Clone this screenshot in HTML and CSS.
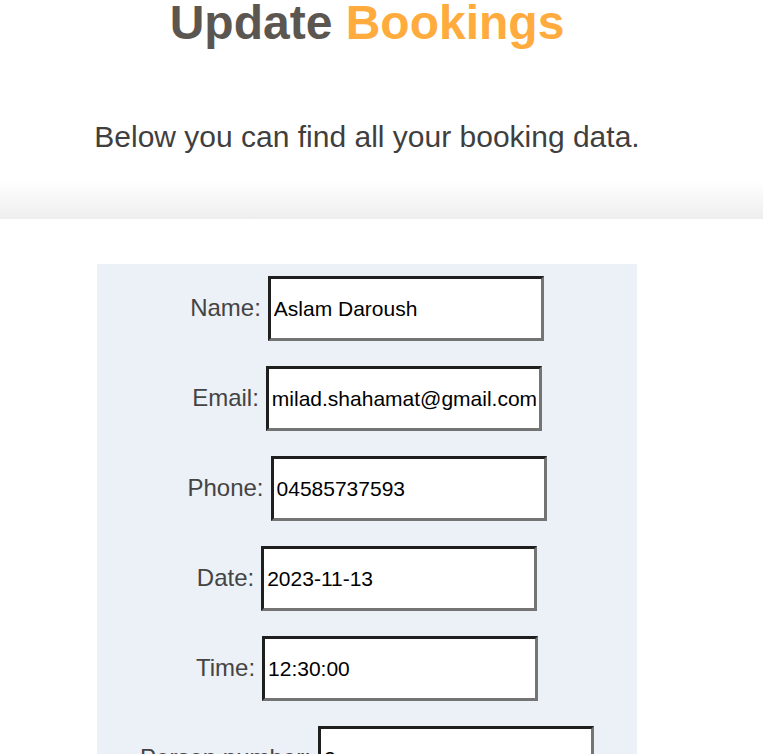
FILE: index.html
```html
<!DOCTYPE html>
<html lang="en">
<head>
<meta charset="utf-8">
<title>Update Bookings</title>
<link rel="stylesheet" href="styles.css">
</head>
<body>
<header class="hero">
  <div class="hero-inner">
    <h1 class="title"><span class="title-dark">Update</span> <span class="title-accent">Bookings</span></h1>
    <p class="subtitle">Below you can find all your booking data.</p>
  </div>
</header>
<main class="main">
  <form class="booking-form">
    <div class="row"><label class="label" for="name">Name:</label><input class="field" id="name" type="text" value="Aslam Daroush"></div>
    <div class="row"><label class="label" for="email">Email:</label><input class="field" id="email" type="text" value="milad.shahamat@gmail.com"></div>
    <div class="row"><label class="label" for="phone">Phone:</label><input class="field" id="phone" type="text" value="04585737593"></div>
    <div class="row"><label class="label" for="date">Date:</label><input class="field" id="date" type="text" value="2023-11-13"></div>
    <div class="row"><label class="label" for="time">Time:</label><input class="field" id="time" type="text" value="12:30:00"></div>
    <div class="row"><label class="label" for="persons">Person number:</label><input class="field" id="persons" type="text" value="2"></div>
    <div class="row"><button class="submit" type="button">Update</button></div>
  </form>
</main>
</body>
</html>
```
FILE: styles.css
```css
html, body {
  margin: 0;
  padding: 0;
  background: #ffffff;
  font-family: "Liberation Sans", Arial, sans-serif;
}

.hero {
  height: 219px;
  background: linear-gradient(to bottom, #ffffff 0, #ffffff 180px, #eeeeee 219px);
}

.hero-inner {
  width: 734px;
  text-align: center;
}

.title {
  margin: 0;
  font-size: 48px;
  line-height: 45px;
  font-weight: bold;
}

.title-dark {
  color: #5c5650;
}

.title-accent {
  color: #ffab3d;
}

.subtitle {
  margin: 75px 0 0;
  font-size: 30px;
  line-height: 34px;
  color: #3f3f3f;
}

.main {
  width: 734px;
  padding-top: 45px;
}

.booking-form {
  width: 540px;
  margin: 0 auto;
  padding-top: 12px;
  background: #ecf0f7;
  min-height: 700px;
}

.row {
  display: flex;
  justify-content: center;
  align-items: baseline;
  column-gap: 7px;
  margin-bottom: 25px;
}

.label {
  font-size: 24px;
  color: #444444;
}

.field {
  box-sizing: border-box;
  width: 276px;
  height: 65px;
  padding: 0 3px;
  margin: 0;
  font-family: "Liberation Sans", Arial, sans-serif;
  font-size: 21px;
  color: #000000;
  background: #ffffff;
  border-style: solid;
  border-width: 3px;
  border-color: #1f1f1f #747474 #747474 #1f1f1f;
  outline: none;
}

.submit {
  font-family: "Liberation Sans", Arial, sans-serif;
  font-size: 21px;
  padding: 10px 24px;
  background: #ffab3d;
  color: #ffffff;
  border: none;
}
```
